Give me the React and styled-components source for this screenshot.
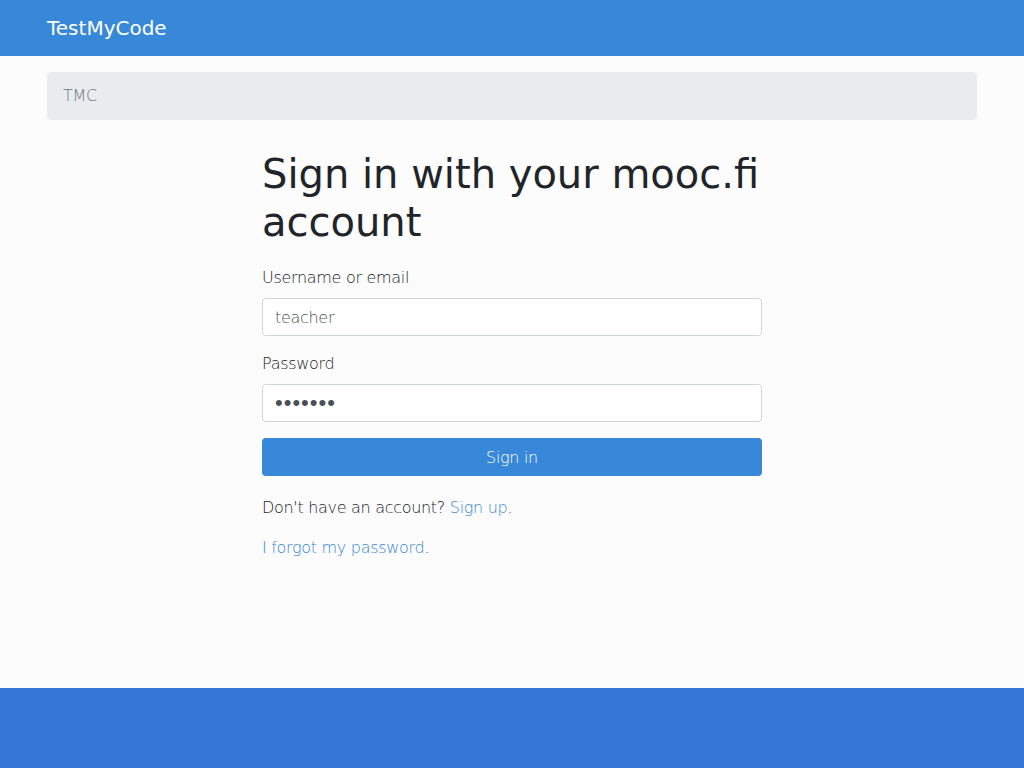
import styled, { createGlobalStyle } from 'styled-components';

const GlobalStyle = createGlobalStyle`
  html, body {
    margin: 0;
    padding: 0;
    background: #fcfcfc;
    font-family: "DejaVu Sans ExtraLight", "DejaVu Sans", sans-serif;
    font-weight: 200;
    font-size: 16px;
    line-height: 1.5;
    letter-spacing: -0.3px;
    color: #212529;
  }
  * { box-sizing: border-box; }
`;

const Page = styled.div`
  min-height: 100vh;
  display: flex;
  flex-direction: column;
`;

const Navbar = styled.nav`
  height: 56px;
  background: #3788d8;
  display: flex;
  align-items: center;
`;

const Container = styled.div`
  width: 960px;
  margin: 0 auto;
  padding: 0 15px;
`;

const Brand = styled.a`
  color: #fff;
  font-family: "DejaVu Sans", sans-serif;
  font-size: 20px;
  font-weight: 400;
  letter-spacing: 0;
  text-decoration: none;
  line-height: 30px;
`;

const Main = styled.main`
  flex: 1;
  padding-top: 16px;
`;

const Breadcrumb = styled.div`
  background: #e9ecef;
  border-radius: 4px;
  padding: 12px 16px;
  color: #6c757d;
  margin-bottom: 30px;
`;

const FormBox = styled.div`
  width: 500px;
  margin: 0 auto;
`;

const Title = styled.h1`
  font-family: "DejaVu Sans", sans-serif;
  font-size: 40px;
  font-weight: 400;
  letter-spacing: 0;
  line-height: 48px;
  margin: 0 0 20px;
`;

const Group = styled.div`
  margin-bottom: 16px;
`;

const Label = styled.label`
  display: block;
  margin-bottom: 8px;
`;

const Input = styled.input`
  display: block;
  width: 100%;
  height: 38px;
  padding: 6px 12px;
  font-family: inherit;
  font-weight: inherit;
  font-size: ${(p) => (p.$secret ? '22px' : '16px')};
  letter-spacing: ${(p) => (p.$secret ? '1px' : '-0.3px')};
  color: #495057;
  background: #fff;
  border: 1px solid #ced4da;
  border-radius: 4px;
  outline: none;
`;

const Button = styled.button`
  display: block;
  width: 100%;
  height: 38px;
  border: none;
  border-radius: 4px;
  background: #3788d8;
  color: #fff;
  font-family: inherit;
  font-weight: inherit;
  font-size: 16px;
  letter-spacing: -0.3px;
  margin-bottom: 20px;
`;

const Text = styled.p`
  margin: 0 0 16px;
`;

const Link = styled.a`
  color: #3788d8;
  text-decoration: none;
`;

const Footer = styled.footer`
  height: 80px;
  background: #3676d6;
`;

export default function App() {
  return (
    <Page>
      <GlobalStyle />
      <Navbar>
        <Container>
          <Brand href="#">TestMyCode</Brand>
        </Container>
      </Navbar>
      <Main>
        <Container>
          <Breadcrumb>TMC</Breadcrumb>
          <FormBox>
            <Title>Sign in with your mooc.fi account</Title>
            <form onSubmit={(e) => e.preventDefault()}>
              <Group>
                <Label htmlFor="login">Username or email</Label>
                <Input id="login" type="text" defaultValue="teacher" />
              </Group>
              <Group>
                <Label htmlFor="password">Password</Label>
                <Input id="password" type="password" defaultValue="1234567" $secret />
              </Group>
              <Button type="submit">Sign in</Button>
            </form>
            <Text>
              Don't have an account? <Link href="#">Sign up</Link>.
            </Text>
            <Text>
              <Link href="#">I forgot my password</Link>.
            </Text>
          </FormBox>
        </Container>
      </Main>
      <Footer />
    </Page>
  );
}
